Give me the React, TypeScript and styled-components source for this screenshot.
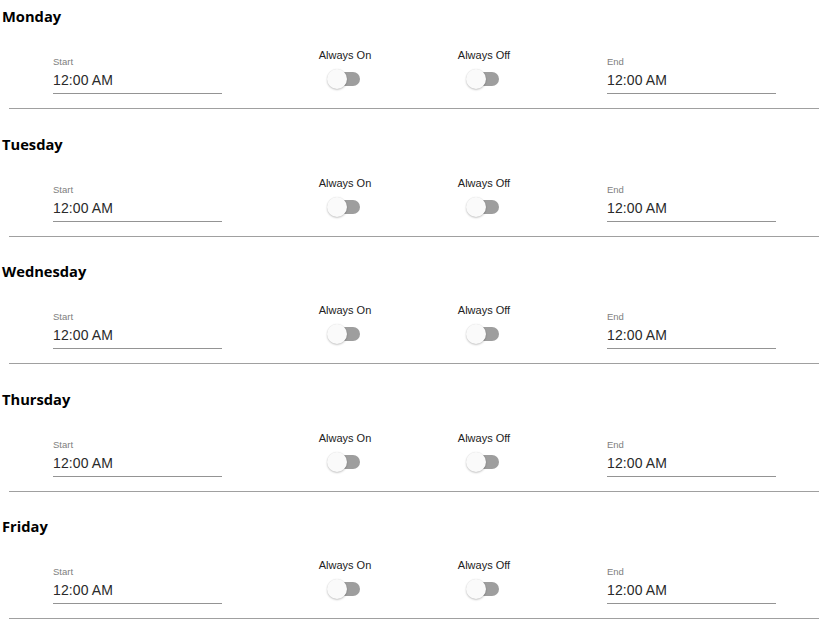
import React from "react";
import styled, { createGlobalStyle } from "styled-components";

const Global = createGlobalStyle`
  html, body { margin: 0; padding: 0; background: #ffffff; }
  body { font-family: "Liberation Sans", Arial, sans-serif; color: #222; }
`;

const Page = styled.div`
  display: flex;
  flex-direction: column;
`;

const Section = styled.section`
  display: flex;
  flex-direction: column;
`;

const DayTitle = styled.h2`
  margin: 0;
  padding-left: 2px;
  height: 32px;
  line-height: 32px;
  font-family: "Open Sans", "Noto Sans", sans-serif;
  font-weight: 700;
  font-size: 14.7px;
  color: #000;
`;

const Row = styled.div`
  display: flex;
  align-items: flex-start;
  gap: 107px;
  margin-left: 53px;
  width: 723px;
  height: 63px;
`;

const Field = styled.div`
  width: 169px;
  display: flex;
  flex-direction: column;
  padding-top: 24px;
  border-bottom: 1px solid #949494;
`;

const FieldLabel = styled.label`
  font-size: 9.5px;
  line-height: 11px;
  color: #808080;
`;

const FieldValue = styled.div`
  font-size: 14px;
  line-height: 17px;
  color: #2a2a2a;
  padding: 5px 0 4px;
  letter-spacing: 0.1px;
`;

const ToggleCol = styled.div`
  width: 32px;
  display: flex;
  flex-direction: column;
  align-items: center;
  padding-top: 16px;
`;

const ToggleLabel = styled.span`
  font-size: 11px;
  line-height: 14px;
  white-space: nowrap;
  color: #222;
`;

const Switch = styled.span`
  position: relative;
  display: block;
  width: 32px;
  height: 20px;
  margin-top: 7px;
`;

const Track = styled.span`
  position: absolute;
  left: 4px;
  top: 3px;
  width: 27px;
  height: 14px;
  border-radius: 7px;
  background: #9e9e9e;
`;

const Thumb = styled.span`
  position: absolute;
  left: -2px;
  top: 0;
  width: 20px;
  height: 20px;
  border-radius: 50%;
  background: #fafafa;
  box-shadow: 0 1px 2px rgba(0, 0, 0, 0.22), 0 0 1px rgba(0, 0, 0, 0.12);
`;

const Divider = styled.hr<{ $last?: boolean }>`
  margin: 13px 0 ${(p) => (p.$last ? "0" : "18.5px")} 9px;
  border: none;
  border-top: 1px solid #a0a0a0;
  height: 0;
`;

const days = ["Monday", "Tuesday", "Wednesday", "Thursday", "Friday"];

const TimeField = ({ label }: { label: string }) => (
  <Field>
    <FieldLabel>{label}</FieldLabel>
    <FieldValue>12:00 AM</FieldValue>
  </Field>
);

const Toggle = ({ label }: { label: string }) => (
  <ToggleCol>
    <ToggleLabel>{label}</ToggleLabel>
    <Switch>
      <Track />
      <Thumb />
    </Switch>
  </ToggleCol>
);

export default function App() {
  return (
    <>
      <Global />
      <Page>
        {days.map((d, i) => (
          <Section key={d}>
            <DayTitle>{d}</DayTitle>
            <Row>
              <TimeField label="Start" />
              <Toggle label="Always On" />
              <Toggle label="Always Off" />
              <TimeField label="End" />
            </Row>
            <Divider $last={i === days.length - 1} />
          </Section>
        ))}
      </Page>
    </>
  );
}
